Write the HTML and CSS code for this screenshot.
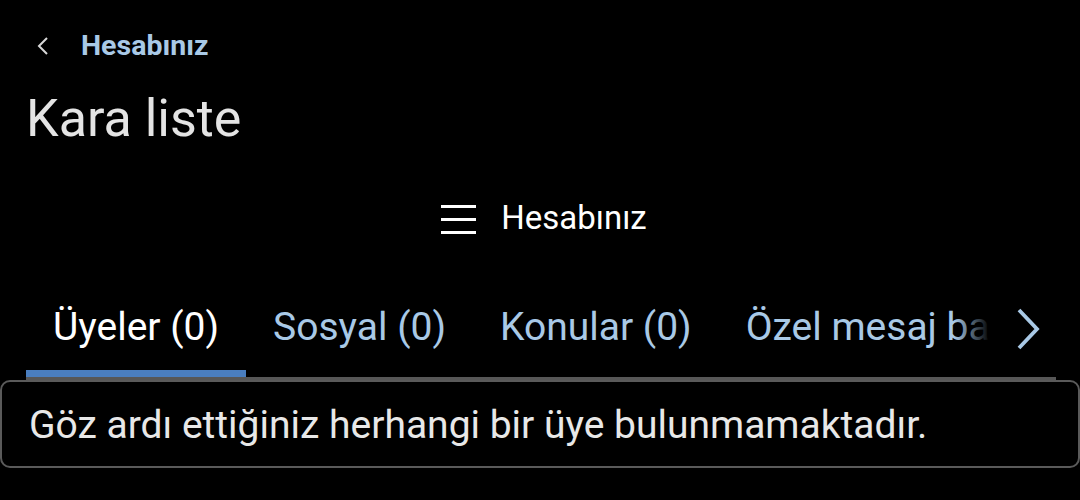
FILE: index.html
```html
<!DOCTYPE html>
<html lang="tr">
<head>
<meta charset="utf-8">
<title>Kara liste</title>
<link rel="stylesheet" href="styles.css">
</head>
<body>
<div class="page">
  <div class="crumb">
    <svg class="crumb-icon" width="14" height="20" viewBox="0 0 14 20"><path d="M11 2 L3 10 L11 18" fill="none" stroke="#d8d8d8" stroke-width="2"/></svg>
    <a class="crumb-link" href="#">Hesabınız</a>
  </div>
  <h1 class="title">Kara liste</h1>
  <div class="nav">
    <span class="burger"><span></span><span></span><span></span></span>
    <span class="nav-text">Hesabınız</span>
  </div>
  <div class="tabs">
    <div class="tab-strip">
      <a class="tab active" href="#">Üyeler (0)</a>
      <a class="tab" href="#">Sosyal (0)</a>
      <a class="tab" href="#">Konular (0)</a>
      <a class="tab" href="#">Özel mesaj başlıkları (0)</a>
    </div>
    <div class="tab-next">
      <svg width="24" height="42" viewBox="0 0 24 42"><path d="M3 2 L21 21 L3 40" fill="none" stroke="#a9c9e6" stroke-width="3.8"/></svg>
    </div>
  </div>
  <div class="card">Göz ardı ettiğiniz herhangi bir üye bulunmamaktadır.</div>
</div>
</body>
</html>
```
FILE: styles.css
```css
* { box-sizing: border-box; }
html, body { margin: 0; padding: 0; background: #000; }
body {
  font-family: Roboto, "Noto Sans", "Liberation Sans", sans-serif;
  color: #e6e6e6;
  width: 1080px;
  height: 500px;
  overflow: hidden;
}
.crumb {
  display: flex;
  align-items: center;
  padding: 30px 26px 0 36px;
  height: 62px;
}
.crumb-icon { display: block; margin-right: 31px; }
.crumb-link {
  font-size: 28.5px;
  line-height: 32px;
  font-weight: 700;
  color: #a9c9e6;
  text-decoration: none;
}
.title {
  margin: 27px 0 0 0;
  padding: 0 26px;
  font-size: 52px;
  line-height: 60px;
  font-weight: 400;
  color: #e4e4e4;
}
.nav {
  margin-top: 49px;
  display: flex;
  justify-content: center;
  align-items: center;
  height: 40px;
  gap: 25px;
  padding-left: 8px;
}
.burger {
  display: flex;
  flex-direction: column;
  justify-content: space-between;
  align-self: flex-start;
  width: 35px;
  height: 29px;
  margin-top: 7px;
}
.burger span { display: block; height: 3px; background: #fff; }
.nav-text { font-size: 33px; line-height: 40px; color: #fff; }
.tabs {
  position: relative;
  margin: 66px 24px 0 26px;
  border-bottom: 3px solid #575757;
}
.tab-strip {
  display: flex;
  overflow: hidden;
  white-space: nowrap;
}
.tab {
  flex: none;
  padding: 0 27px 20px 27px;
  font-size: 39px;
  line-height: 46px;
  color: #a9c9e6;
  text-decoration: none;
  border-bottom: 7px solid transparent;
}
.tab.active { color: #fff; border-bottom-color: #4a7ebf; }
.tab-next {
  position: absolute;
  top: 0;
  right: 0;
  bottom: 4px;
  width: 66px;
  background: #000;
  display: flex;
  align-items: flex-start;
  justify-content: flex-end;
  padding: 4px 16px 0 0;
}
.tab-next::before {
  content: "";
  position: absolute;
  right: 100%;
  top: 0;
  bottom: 0;
  width: 36px;
  background: linear-gradient(to right, rgba(0,0,0,0), #000);
}
.card {
  margin: 0;
  border: 2px solid #5a5a5a;
  border-radius: 10px;
  padding: 20px 27px 18px 27px;
  font-size: 39px;
  line-height: 46px;
  color: #e8e8e8;
}
```
